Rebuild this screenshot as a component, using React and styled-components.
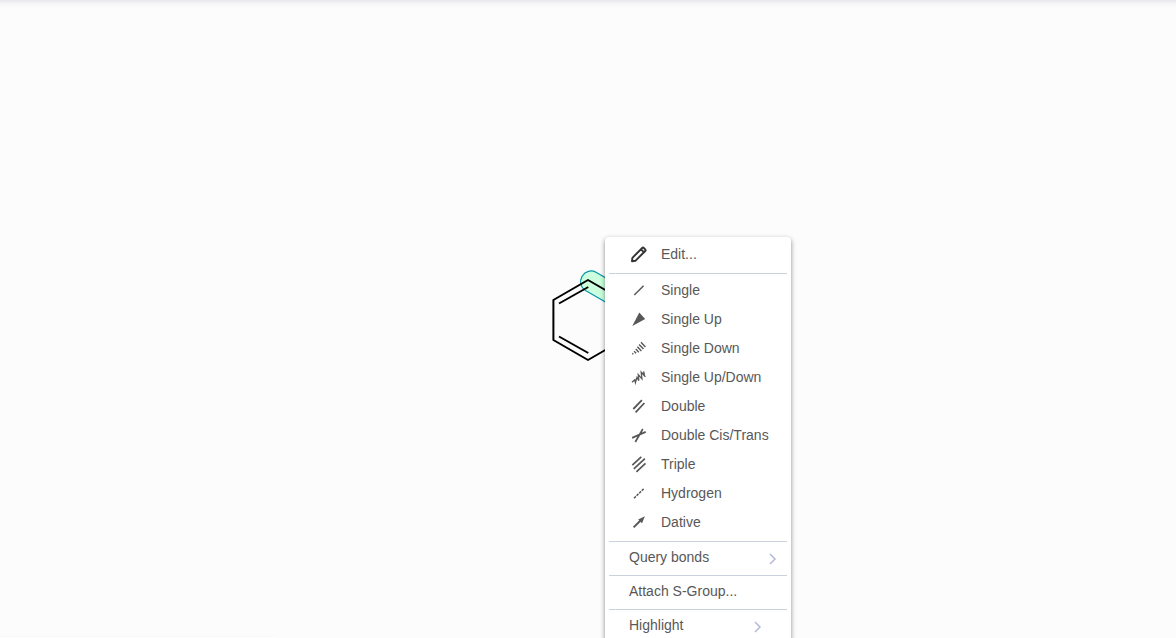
import React from "react";
import styled, { createGlobalStyle } from "styled-components";

const GlobalStyle = createGlobalStyle`
  *, *::before, *::after { box-sizing: border-box; }
  body {
    margin: 0;
    background: #fcfcfc;
    color: #585858;
    font-family: "Liberation Sans", Arial, sans-serif;
    font-size: 14px;
  }
`;

const Canvas = styled.main`
  position: relative;
  display: flex;
  align-items: center;
  justify-content: center;
  width: 100%;
  height: 100vh;
  overflow: hidden;
  background: linear-gradient(#e7e7ec 0, #f4f4f6 3px, #fcfcfc 8px);
`;

const Molecule = styled.svg`
  display: block;
  width: 100px;
  height: 100px;
  overflow: visible;
`;

const BottomEdge = styled.div`
  position: absolute;
  left: 0;
  bottom: 0;
  width: 275px;
  height: 1px;
  background: #ffffff;
  box-shadow: 0 -1px 1px #f7f7f7;
`;

const Menu = styled.div`
  position: absolute;
  left: 605px;
  top: 237px;
  width: 186px;
  padding: 3px 4px;
  border-radius: 4px;
  background: #ffffff;
  box-shadow: 0 2px 5px rgba(0, 0, 0, 0.45);
`;

const Divider = styled.hr`
  height: 1px;
  margin: 4px 0 2px;
  border: 0;
  background: #cad3dd;
`;

const Item = styled.button`
  display: flex;
  align-items: center;
  gap: 12px;
  width: 100%;
  height: ${({ $compact }) => ($compact ? 27 : 29)}px;
  padding: 0 ${({ $inset }) => ($inset ? 24 : 9)}px 2px 20px;
  border: 0;
  background: transparent;
  color: inherit;
  font: inherit;
  line-height: 16px;
  text-align: left;
  white-space: nowrap;
  cursor: pointer;
`;

const Label = styled.span`
  flex: 1;
`;

const Icon = styled.svg`
  flex: none;
  width: 20px;
  height: 20px;
  fill: none;
  stroke: #585858;
  stroke-width: 1.5;
`;

const Arrow = styled.svg`
  flex: none;
  width: 10px;
  height: 12px;
  margin-top: 5px;
  fill: none;
  stroke: #b4b9d9;
  stroke-width: 1.5;
`;

const bonds = [
  { label: "Single", art: <path d="M5.3 15 14.6 5.7" /> },
  {
    label: "Single Up",
    art: <path d="M3.3 17 10.3 3.6 16.2 9.9Z" fill="#585858" stroke="none" />,
  },
  {
    label: "Single Down",
    art: (
      <path
        d="m3.3 15.3 1 1M5.1 13.3l2 2M6.8 11.1l3 3.1M8.4 8.8l4 4.2M10.1 6.5l4.4 4.6M12 4.2l4.4 4.8"
        strokeWidth="1.4"
      />
    ),
  },
  {
    label: "Single Up/Down",
    art: (
      <path
        d="M3 15.2 5.8 12.8 6.4 15.6 8 10.4 9.8 13.6 9.3 7.6 12.9 11.8 12.2 5.2 16.4 9.8M12.2 5.2 15.2 7.4 14.6 4.4"
        strokeWidth="1.3"
      />
    ),
  },
  { label: "Double", art: <path d="M4.3 13 12.9 4.2M6.6 16.3 15.4 7" strokeWidth="1.8" /> },
  { label: "Double Cis/Trans", art: <path d="M3.1 12.9 16.7 6.9M6.3 17 13.8 4" strokeWidth="1.7" /> },
  {
    label: "Triple",
    art: <path d="M3.3 11.2 12.3 2.8M4.8 14.9 15.9 4.6M7.4 17.8 16.5 9.4" strokeWidth="1.7" />,
  },
  {
    label: "Hydrogen",
    art: <path d="M5 15.2 15 5.5" strokeWidth="1.5" strokeDasharray="2.6 1" />,
  },
  {
    label: "Dative",
    art: (
      <>
        <path d="M4.6 15.4 11.8 8.2" strokeWidth="2" />
        <path d="M9.2 7.6 15.9 4.2 13 11.3Z" fill="#585858" stroke="none" />
      </>
    ),
  },
];

function Chevron() {
  return (
    <Arrow viewBox="0 0 10 12" aria-hidden="true">
      <path d="m2 1 5 5-5 5" />
    </Arrow>
  );
}

export default function App() {
  return (
    <>
      <GlobalStyle />
      <Canvas>
        <Molecule viewBox="538 269 100 100" role="img" aria-label="Benzene ring">
          <rect
            x="-10"
            y="-10"
            width="54"
            height="21"
            rx="10"
            transform="translate(591 281) rotate(30)"
            fill="#ccffdd"
            stroke="#0097a8"
            strokeWidth="1.2"
          />
          <path
            d="M588 280 553.4 300V340L588 360 622.6 340V300Z M559 303.5 588.3 287 M559 336.5 588.3 353 M617 303V337"
            fill="none"
            stroke="#000000"
            strokeWidth="2"
            strokeLinejoin="round"
          />
        </Molecule>
        <BottomEdge />
        <Menu role="menu">
          <Item role="menuitem">
            <Icon viewBox="0 0 20 20" aria-hidden="true">
              <path
                d="M3 17.2 3.4 13.8 13.2 4Q14 3.2 14.8 4L16.2 5.4Q17 6.2 16.2 7L6.4 16.8ZM12 5.4 14.8 8.2"
                stroke="#333333"
                strokeWidth="1.9"
                strokeLinejoin="round"
              />
            </Icon>
            <Label>Edit...</Label>
          </Item>
          <Divider />
          {bonds.map(({ label, art }) => (
            <Item key={label} role="menuitem">
              <Icon viewBox="0 0 20 20" aria-hidden="true">{art}</Icon>
              <Label>{label}</Label>
            </Item>
          ))}
          <Divider />
          <Item role="menuitem" aria-haspopup="menu" $compact>
            <Label>Query bonds</Label>
            <Chevron />
          </Item>
          <Divider />
          <Item role="menuitem" $compact>
            <Label>Attach S-Group...</Label>
          </Item>
          <Divider />
          <Item role="menuitem" aria-haspopup="menu" $compact $inset>
            <Label>Highlight</Label>
            <Chevron />
          </Item>
        </Menu>
      </Canvas>
    </>
  );
}
